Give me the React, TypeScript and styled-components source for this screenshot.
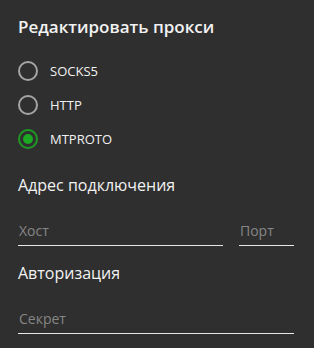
import React, { useState } from 'react'
import styled, { createGlobalStyle } from 'styled-components'

const GlobalStyle = createGlobalStyle`
  html, body {
    margin: 0;
    padding: 0;
    background: #2f2f2f;
  }
  body {
    font-family: 'Open Sans', 'Noto Sans', sans-serif;
  }
`

const Box = styled.div`
  width: 314px;
  height: 348px;
  box-sizing: border-box;
  padding: 16px 20px 0 18px;
  background: #2f2f2f;
  color: #f2f2f2;
`

const Title = styled.div`
  font-size: 17px;
  font-weight: 600;
  line-height: 22px;
  margin-bottom: 23px;
`

const Options = styled.div`
  display: flex;
  flex-direction: column;
  gap: 14px;
`

const Option = styled.label`
  display: flex;
  align-items: center;
  gap: 12px;
  height: 20px;
  font-size: 13px;
  cursor: pointer;
`

const Circle = styled.span<{ $on: boolean }>`
  width: 20px;
  height: 20px;
  box-sizing: border-box;
  border-radius: 50%;
  border: 2px solid ${({ $on }) => ($on ? '#1f9b25' : '#a5a5a5')};
  display: flex;
  align-items: center;
  justify-content: center;
  &::after {
    content: '';
    width: 10px;
    height: 10px;
    border-radius: 50%;
    background: #1ca823;
    display: ${({ $on }) => ($on ? 'block' : 'none')};
  }
`

const Section = styled.div<{ $top: number }>`
  font-size: 16px;
  line-height: 22px;
  margin-top: ${({ $top }) => $top}px;
`

const FieldRow = styled.div`
  display: flex;
  gap: 16px;
  margin-top: 25px;
`

const Field = styled.input<{ $w?: number }>`
  ${({ $w }) => ($w ? `width: ${$w}px;` : 'flex: 1; min-width: 0;')}
  background: transparent;
  border: none;
  border-bottom: 1px solid #e6e6e6;
  outline: none;
  color: #f2f2f2;
  font-family: inherit;
  font-size: 14px;
  padding: 0 0 5px 1px;
  height: 25px;
  box-sizing: border-box;
  &::placeholder {
    color: #868686;
  }
`

const types = ['SOCKS5', 'HTTP', 'MTPROTO']

export default function App() {
  const [type, setType] = useState('MTPROTO')
  return (
    <Box>
      <GlobalStyle />
      <Title>Редактировать прокси</Title>
      <Options>
        {types.map(t => (
          <Option key={t} onClick={() => setType(t)}>
            <Circle $on={type === t} />
            {t}
          </Option>
        ))}
      </Options>
      <Section $top={25}>Адрес подключения</Section>
      <FieldRow>
        <Field placeholder="Хост" />
        <Field $w={55} placeholder="Порт" />
      </FieldRow>
      <Section $top={16}>Авторизация</Section>
      <FieldRow>
        <Field placeholder="Секрет" />
      </FieldRow>
    </Box>
  )
}
